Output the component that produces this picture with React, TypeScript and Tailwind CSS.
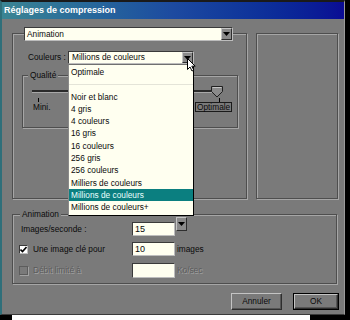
import React from 'react'

const sunken =
  'border border-t-[#3a3a3a] border-l-[#3a3a3a] border-b-[#bdbdbd] border-r-[#bdbdbd]'
const raised =
  'border border-t-[#c4c4c4] border-l-[#c4c4c4] border-b-[#2e2e2e] border-r-[#2e2e2e]'
const etched = 'border border-[#4e4e4e] shadow-[inset_1px_1px_0_#a6a6a6,1px_1px_0_#a6a6a6]'
const disabled = 'text-[#5c5c5c] [text-shadow:1px_1px_0_#a2a2a2]'

function Arrow() {
  return (
    <svg width="7" height="4" viewBox="0 0 7 4">
      <path d="M0 0h7L3.5 4z" fill="#000" />
    </svg>
  )
}

function DropButton({ className = '' }: { className?: string }) {
  return (
    <div className={`flex items-center justify-center w-[11px] bg-[#8a8a8a] ${raised} ${className}`}>
      <Arrow />
    </div>
  )
}

const colours = [
  'Optimale',
  '',
  'Noir et blanc',
  '4 gris',
  '4 couleurs',
  '16 gris',
  '16 couleurs',
  '256 gris',
  '256 couleurs',
  'Milliers de couleurs',
  'Millions de couleurs',
  'Millions de couleurs+',
]

export default function App() {
  return (
    <div className="w-[350px] h-[320px] bg-black overflow-hidden flex flex-col font-['Liberation_Sans',Arial,sans-serif] text-[8.3px] text-[#0a0a0a]">
      <div className="w-[345px] h-[315px] shrink-0 bg-[#7a7a7a] border-l-2 border-l-[#2f6f7a] border-t-2 border-t-[#1a1a1a] border-r border-r-[#9a9a9a] border-b border-b-[#3a3a3a] flex flex-col">
        {/* title */}
        <div className="h-[17px] shrink-0 bg-gradient-to-r from-[#3b8593] via-[#1d4aa0] to-[#0b0b94] flex items-center pl-[2px]">
          <span className="text-white font-bold text-[9px]">Réglages de compression</span>
        </div>

        <div className="pl-[10px] pt-[14px] flex flex-col">
          {/* top section */}
          <div className="flex">
            <div className={`w-[235px] h-[166px] ${etched} flex flex-col`}>
              <div className={`-mt-[7px] ml-[11px] w-[209px] h-[14px] flex bg-[#fffff0] ${sunken}`}>
                <span className="flex-1 pl-[2px] leading-[12px]">Animation</span>
                <DropButton />
              </div>

              <div className="mt-[10px] ml-[15px] flex items-center h-[13px]">
                <span className="w-[40px]">Couleurs :</span>
                <div className={`relative w-[126px] h-[13px] flex bg-[#fffff0] ${sunken}`}>
                  <span className="flex-1 pl-[3px] leading-[11px]">Millions de couleurs</span>
                  <DropButton />
                  <div className="absolute left-[-1px] top-[12px] z-10 w-[126px] py-[1px] bg-[#fffff0] border border-t-[#707070] border-l-[#8a8a8a] border-b-black border-r-black">
                    {colours.map((c, i) =>
                      c === '' ? (
                        <div key={i} className="h-[12.3px] flex items-center">
                          <div className="w-full h-px bg-[#e4e4d8]" />
                        </div>
                      ) : (
                        <div
                          key={i}
                          className={`h-[12.3px] leading-[12.3px] pl-[2px] whitespace-nowrap ${
                            c === 'Millions de couleurs' ? 'bg-[#0b7f80] text-[#eaffff]' : ''
                          }`}
                        >
                          {c}
                        </div>
                      ),
                    )}
                  </div>
                  <svg className="absolute left-[118px] top-[6px] z-20" width="9" height="14" viewBox="0 0 9 14">
                    <path d="M0.5 0.5v11l2.5-2.5 2 4 1.8-0.9-2-3.9h3.4z" fill="#fff" stroke="#000" strokeWidth="1" />
                  </svg>
                </div>
              </div>

              {/* qualité */}
              <div className={`mt-[11px] ml-[9px] w-[216px] h-[53px] ${etched} flex flex-col`}>
                <span className="-mt-[6px] ml-[5px] px-[2px] w-fit bg-[#7a7a7a] leading-[10px]">Qualité</span>
                <div className="mt-[5px] ml-[9px] flex items-center">
                  <div className="w-[181px] h-[3px] bg-[#2a2a2a] border-b border-b-[#a8a8a8]" />
                  <svg className="-ml-[3px]" width="14" height="13" viewBox="0 0 14 13">
                    <path d="M1.5 1.5h11v5l-5.5 5.5-5.5-5.5z" fill="#8a8a8a" stroke="#202020" strokeWidth="1" />
                    <path d="M2.5 2.5h9" stroke="#c4c4c4" />
                  </svg>
                </div>
                <div className="flex ml-[10px]">
                  <div className="w-[20px] flex flex-col">
                    <div className="ml-[5px] w-px h-[4px] bg-black" />
                    <span className="leading-[10px]">Mini.</span>
                  </div>
                  <div className="ml-[142px] flex flex-col">
                    <div className="ml-[24px] w-px h-[4px] bg-black" />
                    <span className="border border-[#1a1a1a] px-[1px] leading-[8px]">Optimale</span>
                  </div>
                </div>
              </div>
            </div>

            <div className={`ml-[9px] w-[82px] h-[166px] ${etched}`} />
          </div>

          {/* animation group */}
          <div className={`mt-[15px] w-[325px] h-[70px] ${etched} flex flex-col`}>
            <span className="-mt-[6px] ml-[7px] px-[2px] w-fit bg-[#7a7a7a] leading-[10px]">Animation</span>

            <div className="mt-[3px] ml-[8px] flex items-center h-[14px]">
              <span className="w-[111px]">Images/seconde :</span>
              <div className={`w-[43px] h-[14px] bg-[#fffff0] ${sunken} pl-[2px] leading-[12px] text-[9px]`}>15</div>
              <DropButton className="h-[14px] ml-[1px] mb-[10px]" />
            </div>

            <div className="mt-[6px] ml-[6px] flex items-center h-[14px]">
              <div className="w-[113px] flex items-center">
                <div className={`w-[9px] h-[9px] bg-white ${sunken} flex items-center justify-center`}>
                  <svg width="7" height="7" viewBox="0 0 7 7">
                    <path d="M0.5 3.5l2 2 4-4.5" fill="none" stroke="#000" strokeWidth="1.6" />
                  </svg>
                </div>
                <span className="ml-[5px]">Une image clé pour</span>
              </div>
              <div className={`w-[43px] h-[14px] bg-[#fffff0] ${sunken} pl-[2px] leading-[12px] text-[9px]`}>10</div>
              <span className="ml-[2px]">images</span>
            </div>

            <div className="mt-[7px] ml-[6px] flex items-center h-[15px]">
              <div className="w-[113px] flex items-center">
                <div className="w-[9px] h-[9px] border border-[#5c5c5c] shadow-[1px_1px_0_#a2a2a2]" />
                <span className={`ml-[5px] ${disabled}`}>Débit limité à</span>
              </div>
              <div className={`w-[43px] h-[15px] bg-[#fffff0] ${sunken}`} />
              <span className={`ml-[2px] ${disabled}`}>Ko/sec</span>
            </div>
          </div>

          {/* buttons */}
          <div className="mt-[9px] mr-[5px] flex justify-end gap-[11px]">
            <div className={`w-[51px] h-[17px] bg-[#7a7a7a] ${raised} shadow-[inset_-1px_-1px_0_#555] flex items-center justify-center`}>
              Annuler
            </div>
            <div className="w-[46px] h-[17px] border border-black flex">
              <div className={`flex-1 ${raised} shadow-[inset_-1px_-1px_0_#555] flex items-center justify-center`}>OK</div>
            </div>
          </div>
        </div>
      </div>
      <div className="ml-[12px] w-[298px] flex-1 bg-white" />
    </div>
  )
}
